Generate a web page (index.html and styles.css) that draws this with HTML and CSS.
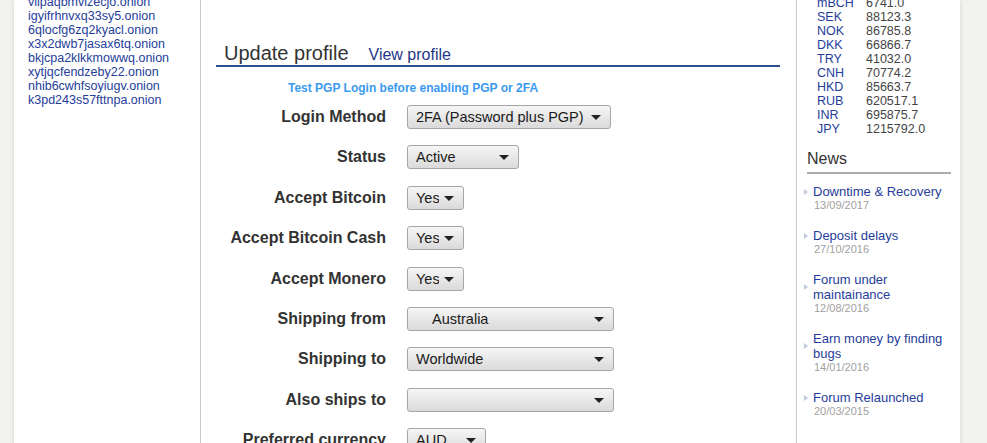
FILE: index.html
```html
<!DOCTYPE html>
<html lang="en">
<head>
<meta charset="utf-8">
<title>Update profile</title>
<link rel="stylesheet" href="styles.css">
</head>
<body>
<div class="page">
  <aside class="left">
    <ul class="mirrors">
      <li><a href="#">vllpaqbmvizecjo.onion</a></li>
      <li><a href="#">igyifrhnvxq33sy5.onion</a></li>
      <li><a href="#">6qlocfg6zq2kyacl.onion</a></li>
      <li><a href="#">x3x2dwb7jasax6tq.onion</a></li>
      <li><a href="#">bkjcpa2klkkmowwq.onion</a></li>
      <li><a href="#">xytjqcfendzeby22.onion</a></li>
      <li><a href="#">nhib6cwhfsoyiugv.onion</a></li>
      <li><a href="#">k3pd243s57fttnpa.onion</a></li>
    </ul>
  </aside>

  <main class="main">
    <div class="tabs">
      <h2 class="tab-title">Update profile</h2>
      <a class="tab-link" href="#">View profile</a>
    </div>
    <p class="notice"><a href="#">Test PGP Login before enabling PGP or 2FA</a></p>

    <form class="form">
      <label class="lbl">Login Method</label>
      <span class="select w-login"><select><option>2FA (Password plus PGP)</option></select></span>

      <label class="lbl">Status</label>
      <span class="select w-status"><select><option>Active</option></select></span>

      <label class="lbl">Accept Bitcoin</label>
      <span class="select w-yes"><select><option>Yes</option></select></span>

      <label class="lbl">Accept Bitcoin Cash</label>
      <span class="select w-yes"><select><option>Yes</option></select></span>

      <label class="lbl">Accept Monero</label>
      <span class="select w-yes"><select><option>Yes</option></select></span>

      <label class="lbl">Shipping from</label>
      <span class="select w-ship indent"><select><option>Australia</option></select></span>

      <label class="lbl">Shipping to</label>
      <span class="select w-ship"><select><option>Worldwide</option></select></span>

      <label class="lbl">Also ships to</label>
      <span class="select w-ship"><select><option></option></select></span>

      <label class="lbl">Preferred currency</label>
      <span class="select w-cur"><select><option>AUD</option></select></span>
    </form>
  </main>

  <aside class="right">
    <div class="rates">
      <a href="#">mBCH</a><span>6741.0</span>
      <a href="#">SEK</a><span>88123.3</span>
      <a href="#">NOK</a><span>86785.8</span>
      <a href="#">DKK</a><span>66866.7</span>
      <a href="#">TRY</a><span>41032.0</span>
      <a href="#">CNH</a><span>70774.2</span>
      <a href="#">HKD</a><span>85663.7</span>
      <a href="#">RUB</a><span>620517.1</span>
      <a href="#">INR</a><span>695875.7</span>
      <a href="#">JPY</a><span>1215792.0</span>
    </div>
    <h3 class="news-title">News</h3>
    <ul class="news">
      <li><a class="news-link" href="#">Downtime &amp; Recovery</a><div class="news-date">13/09/2017</div></li>
      <li><a class="news-link" href="#">Deposit delays</a><div class="news-date">27/10/2016</div></li>
      <li><a class="news-link" href="#">Forum under maintainance</a><div class="news-date">12/08/2016</div></li>
      <li><a class="news-link" href="#">Earn money by finding bugs</a><div class="news-date">14/01/2016</div></li>
      <li><a class="news-link" href="#">Forum Relaunched</a><div class="news-date">20/03/2015</div></li>
    </ul>
  </aside>
</div>
</body>
</html>
```

FILE: styles.css
```css
html, body {
  margin: 0;
  padding: 0;
  background: #f2f2ee;
  font-family: "Liberation Sans", Arial, sans-serif;
  color: #333;
}

a { text-decoration: none; color: #263d9a; }

.page {
  margin-left: 14px;
  width: 946px;
  min-height: 443px;
  display: grid;
  grid-template-columns: 187px 596px 163px;
  background: #fff;
  box-shadow: 0 0 5px rgba(0, 0, 0, 0.13);
  overflow: hidden;
}

/* left column */
.left {
  border-right: 1px solid #c9c9c9;
}
.mirrors {
  list-style: none;
  margin: -5px 0 0 0;
  padding: 0 0 0 14px;
  font-size: 12.5px;
  line-height: 14px;
}

/* main column */
.main {
  border-right: 1px solid #c9c9c9;
  padding: 43px 16px 0 15px;
}
.tabs {
  display: flex;
  align-items: baseline;
  gap: 20px;
  padding-left: 8px;
  border-bottom: 2px solid #2e4f8f;
}
.tab-title {
  margin: 0;
  font-size: 20px;
  line-height: 20px;
  font-weight: normal;
  color: #333;
}
.tab-link {
  font-size: 16px;
  line-height: 20px;
  color: #1f3686;
}
.notice {
  margin: 14px 0 0 72px;
  font-size: 12px;
  line-height: 14px;
  font-weight: bold;
}
.notice a { color: #3a9af0; }

.form {
  margin-top: 10px;
  display: grid;
  grid-template-columns: 170px auto;
  column-gap: 21px;
  row-gap: 16.4px;
  align-items: center;
  justify-items: start;
}
.lbl {
  justify-self: end;
  font-size: 16px;
  font-weight: bold;
  color: #333;
}

.select {
  position: relative;
  display: inline-block;
  height: 24px;
}
.select select {
  -webkit-appearance: none;
  appearance: none;
  width: 100%;
  height: 24px;
  margin: 0;
  box-sizing: border-box;
  border: 1px solid #a6a6a6;
  border-radius: 3px;
  background: linear-gradient(#f6f6f6, #dadada);
  padding: 0 24px 0 8px;
  font-family: "Liberation Sans", Arial, sans-serif;
  font-size: 14.5px;
  color: #1a1a1a;
  outline: none;
}
.select::after {
  content: "";
  position: absolute;
  right: 10px;
  top: 10px;
  border-left: 5px solid transparent;
  border-right: 5px solid transparent;
  border-top: 5px solid #222;
  pointer-events: none;
}
.w-login { width: 204px; }
.w-status { width: 112px; }
.w-yes { width: 57px; }
.w-ship { width: 207px; }
.w-cur { width: 79px; }
.indent select { padding-left: 24px; }

/* right column */
.rates {
  display: grid;
  grid-template-columns: 49px auto;
  margin-top: -4px;
  padding-left: 20px;
  font-size: 12.5px;
  line-height: 14px;
}
.rates span { color: #444; }

.news-title {
  margin: 14px 9px 0 10px;
  padding-bottom: 4px;
  border-bottom: 2px solid #ababab;
  font-size: 16px;
  line-height: 18px;
  font-weight: normal;
  color: #333;
}
.news {
  list-style: none;
  margin: 10px 0 0 0;
  padding: 0 9px 0 16px;
}
.news li { margin-bottom: 16px; }
.news-link {
  position: relative;
  display: block;
  font-size: 13px;
  line-height: 15px;
  color: #263d9a;
}
.news-link::before {
  content: "";
  position: absolute;
  left: -9px;
  top: 50%;
  margin-top: -3px;
  border-top: 3px solid transparent;
  border-bottom: 3px solid transparent;
  border-left: 4px solid #bfcade;
}
.news-date {
  padding-left: 1px;
  font-size: 11px;
  line-height: 13px;
  color: #a0a0a0;
}
```
